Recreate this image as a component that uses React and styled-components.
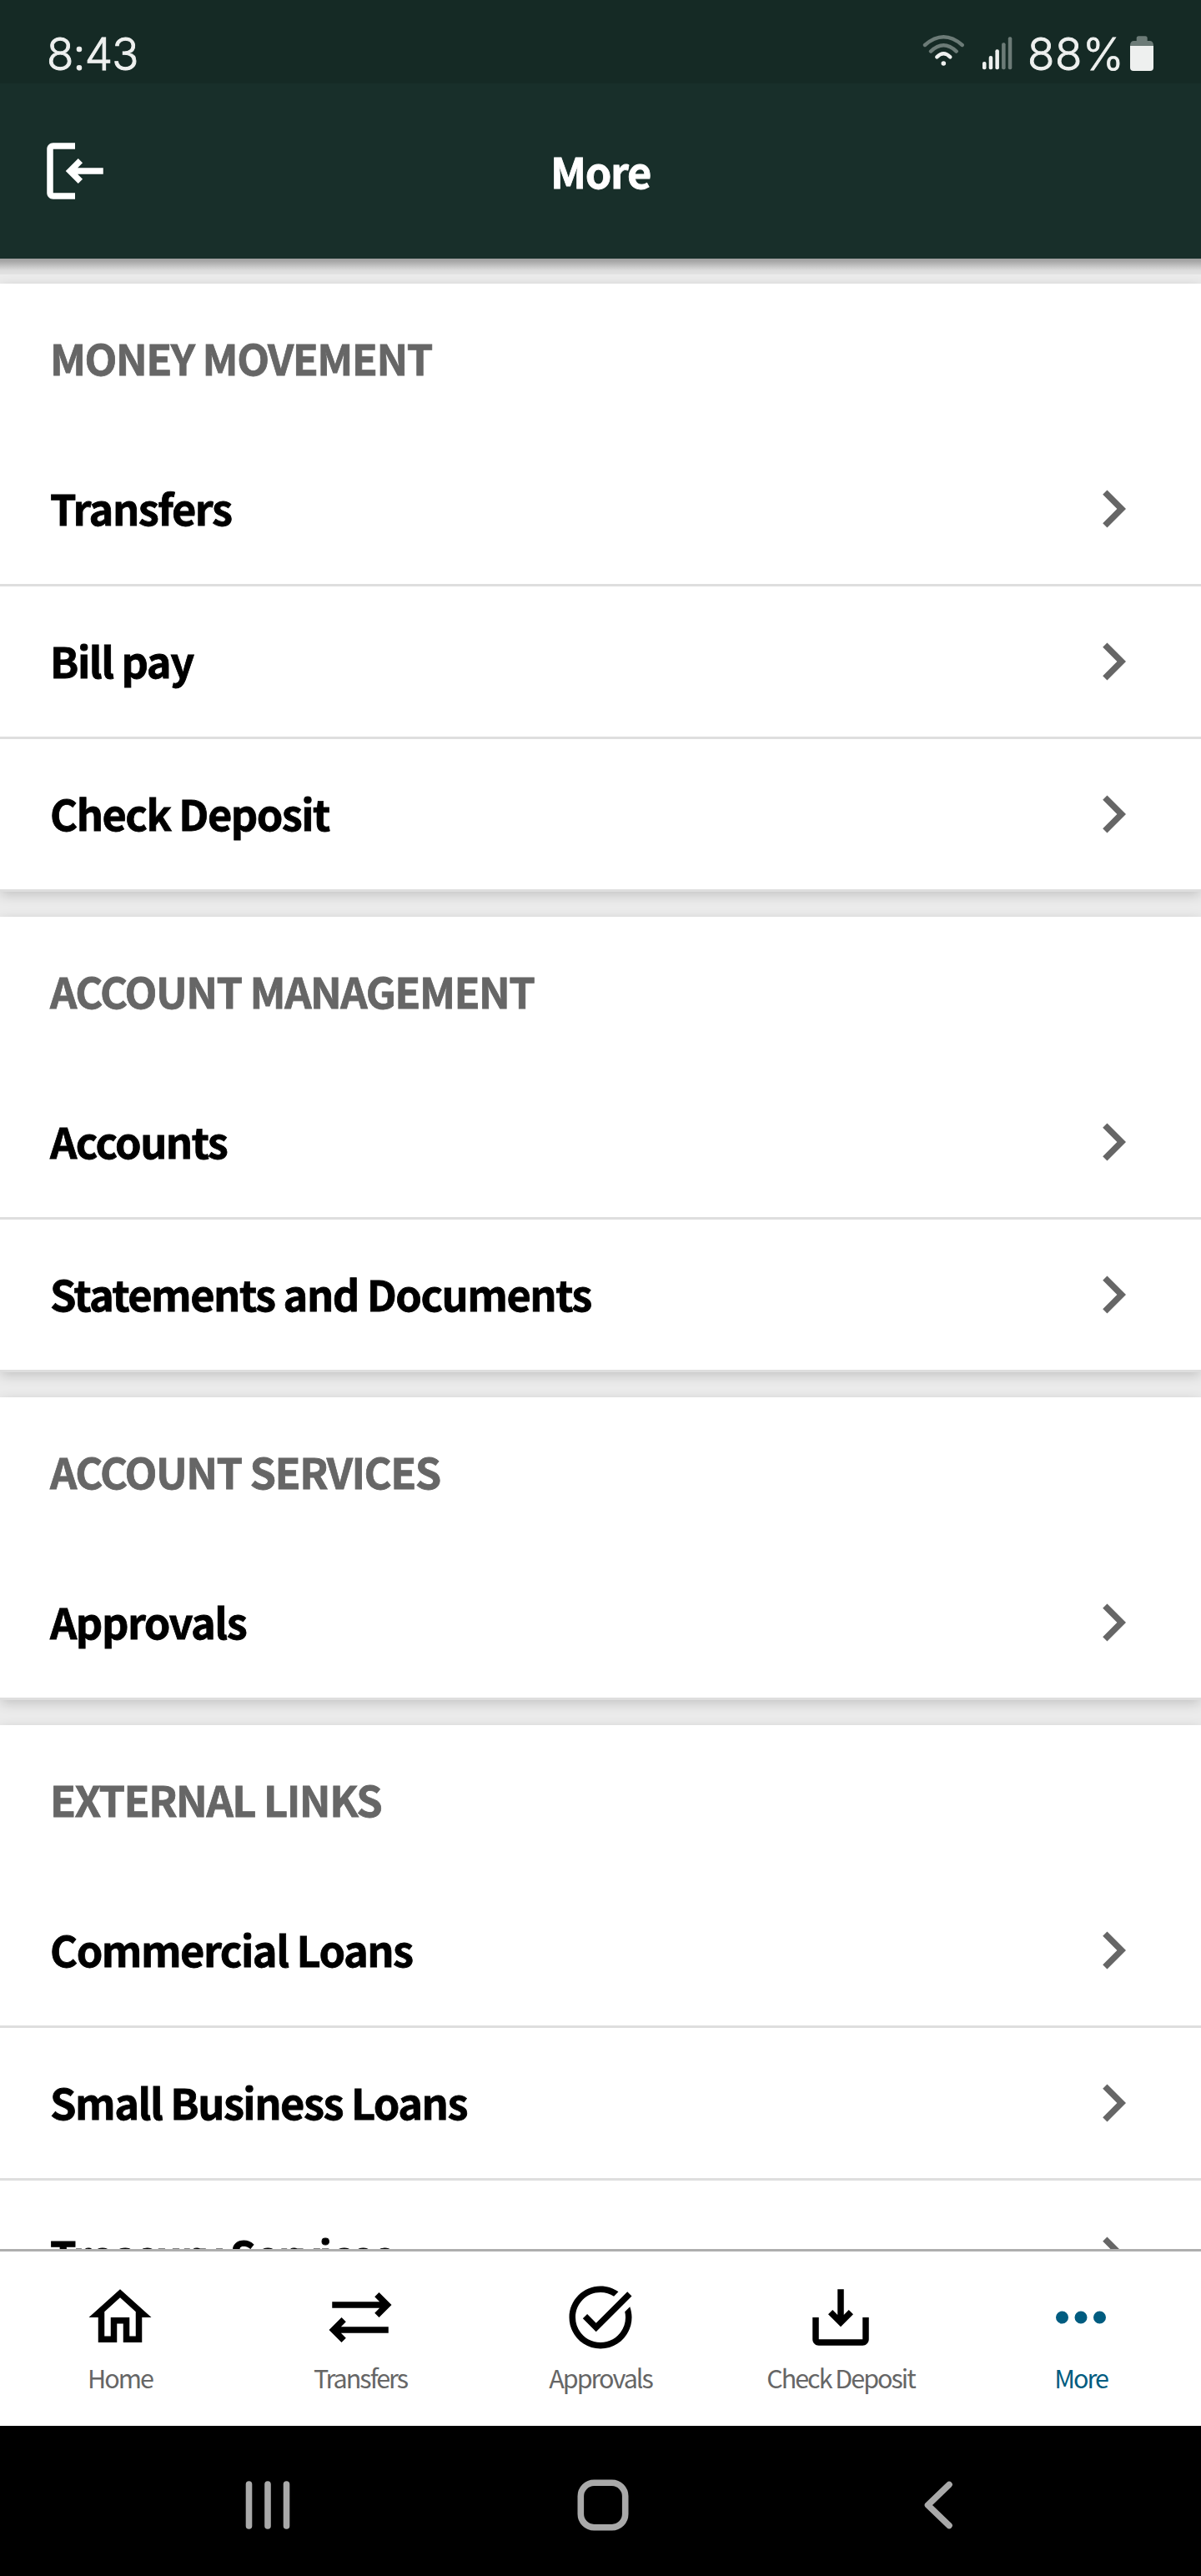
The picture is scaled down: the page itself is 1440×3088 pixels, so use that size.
import React from 'react';
import styled, { createGlobalStyle } from 'styled-components';

const GlobalStyle = createGlobalStyle`
  * {
    box-sizing: border-box;
  }
  body {
    margin: 0;
    background: #ebebeb;
    font-family: "Noto Sans CJK SC", "Noto Sans", sans-serif;
  }
`

const Screen = styled.div`
  display: flex;
  flex-direction: column;
  width: 1440px;
  height: 3088px;
  overflow: hidden;
`

const StatusBar = styled.div`
  display: flex;
  align-items: center;
  flex-shrink: 0;
  height: 100px;
  padding: 26px 56px 0;
  background: #152a25;
  color: #eef0ef;
  font-family: Inter, sans-serif;
  font-size: 53px;
  font-weight: 300;
  line-height: 60px;
  -webkit-text-stroke: 0.9px currentColor;
`

const Time = styled.span`
  flex: 1;
  padding-top: 3px;
  letter-spacing: -0.8px;
`

const StatusIcons = styled.div`
  display: flex;
  align-items: center;
  svg + svg {
    margin-left: 16px;
  }
`

const BatteryLevel = styled.span`
  width: 122px;
  margin-left: 16px;
  padding-top: 3px;
  letter-spacing: 0.6px;
`

const Header = styled.header`
  display: grid;
  grid-template-columns: 90px 1fr 90px;
  align-items: center;
  flex-shrink: 0;
  height: 210px;
  padding: 0 45px;
  background: #182f2a;
  color: #fff;
`

const IconButton = styled.button`
  display: flex;
  padding: 0;
  border: none;
  background: none;
  color: inherit;
`

const Title = styled.h1`
  margin: 0;
  padding-bottom: 3px;
  font-size: 50.5px;
  font-weight: 700;
  letter-spacing: -1.4px;
  line-height: 72px;
  text-align: center;
  -webkit-text-stroke: 0.8px currentColor;
`

const Content = styled.main`
  display: flex;
  flex-direction: column;
  flex: 1;
  gap: 30px;
  min-height: 0;
  overflow: hidden;
  padding-top: 30px;
  background: linear-gradient(#a0a0a0, #a6a6a6 3px, #c4c4c4 9px, #dcdcdc 14px, #e2e2e2 19px, transparent 19px) #ebebeb;
`

const Card = styled.section`
  flex-shrink: 0;
  background: #fff;
  box-shadow: 0 4px 14px -1px rgba(0, 0, 0, 0.19);
`

const CardTitle = styled.h2`
  display: flex;
  align-items: center;
  height: 180px;
  margin: 0;
  padding: 0 60px 4px;
  color: #666;
  font-size: 50.5px;
  font-weight: 700;
  letter-spacing: -1.5px;
  -webkit-text-stroke: 0.8px currentColor;
`

const Row = styled.div`
  display: flex;
  align-items: center;
  justify-content: space-between;
  height: 183px;
  padding: 0 60px;
  border-bottom: 3px solid #dedede;
  color: #666;
`

const RowLabel = styled.span`
  padding-bottom: 4px;
  color: #000;
  font-size: 50.5px;
  font-weight: 700;
  letter-spacing: -1.5px;
  line-height: 72px;
  -webkit-text-stroke: 0.8px currentColor;
`

const TabBar = styled.nav`
  display: grid;
  grid-template-columns: repeat(5, 1fr);
  flex-shrink: 0;
  height: 212px;
  padding-top: 34px;
  border-top: 3px solid #aeaeae;
  background: #fff;
`

const Tab = styled.div`
  display: flex;
  flex-direction: column;
  align-items: center;
  color: ${props => props.$active ? '#005c80' : '#000'};
`

const TabLabel = styled.span`
  margin-top: 5px;
  color: ${props => props.$active ? '#005c80' : '#666'};
  font-size: 30.5px;
  letter-spacing: -2px;
  line-height: 44px;
  white-space: nowrap;
`

const SystemNav = styled.div`
  display: flex;
  align-items: center;
  justify-content: center;
  flex-shrink: 0;
  gap: 312px;
  height: 180px;
  padding: 9px 0 0 5px;
  background: #000;
  color: #a9a9a9;
`

const Icon = ({ d }) => (
  <svg width="90" height="90" viewBox="0 0 24 24" fill="currentColor"><path d={d}/></svg>
)

const icons = {
  logout: 'M12 5V3H5c-1.1 0-2 .9-2 2v14c0 1.1.9 2 2 2h7v-2H5V5h7zM13 8l-4 4 4 4 1.41-1.41L12.83 13H21v-2h-8.17l1.58-1.59z',
  chevron: 'M10 6L8.59 7.41 13.17 12l-4.58 4.59L10 18l6-6z',
  home: 'M12 5.69l5 4.5V18h-2v-6H9v6H7v-7.81l5-4.5M12 3L2 12h3v8h6v-6h2v6h6v-8h3L12 3z',
  transfers: 'M18 4l-1.41 1.41L18.17 7H3v2h15.17l-1.58 1.59L18 12l4-4zM6 12l-4 4 4 4 1.41-1.41L5.83 17H21v-2H5.83l1.58-1.59z',
  approvals: 'M22 5.18L10.59 16.6l-4.24-4.24 1.41-1.41 2.83 2.83 10-10L22 5.18zM19.79 10.22c.13.57.21 1.17.21 1.78 0 4.42-3.58 8-8 8s-8-3.58-8-8 3.58-8 8-8c1.58 0 3.04.46 4.28 1.25l1.44-1.44C16.1 2.67 14.13 2 12 2 6.48 2 2 6.48 2 12s4.48 10 10 10 10-4.48 10-10c0-1.19-.22-2.33-.6-3.39l-1.61 1.61z',
  deposit: 'M13 3h-2v8.17L9.41 9.59 8 11l4 4 4-4-1.41-1.41L13 11.17zM3 12v7c0 1.1.9 2 2 2h14c1.1 0 2-.9 2-2v-7h-2v7H5v-7z',
  more: 'M6 10a2 2 0 100 4 2 2 0 000-4zM12 10a2 2 0 100 4 2 2 0 000-4zM18 10a2 2 0 100 4 2 2 0 000-4z'
}

const sections = [
  { title: 'MONEY MOVEMENT', items: ['Transfers', 'Bill pay', 'Check Deposit'] },
  { title: 'ACCOUNT MANAGEMENT', items: ['Accounts', 'Statements and Documents'] },
  { title: 'ACCOUNT SERVICES', items: ['Approvals'] },
  { title: 'EXTERNAL LINKS', items: ['Commercial Loans', 'Small Business Loans', 'Treasury Services'] }
]

const tabs = [
  { label: 'Home', icon: icons.home },
  { label: 'Transfers', icon: icons.transfers },
  { label: 'Approvals', icon: icons.approvals },
  { label: 'Check Deposit', icon: icons.deposit },
  { label: 'More', icon: icons.more }
]

const Wifi = () => (
  <svg width="56" height="46" viewBox="0 0 56 46" fill="none" strokeWidth="4.4" strokeLinecap="round">
    <path d="M5 14Q27.3 -5.4 49.7 14M12 21.6Q27.3 7 42.7 21.6" stroke="#6c7b77"/>
    <path d="M19.3 28.4Q27.3 20.4 35.3 28.4" stroke="#eef0ef"/>
    <circle cx="27.3" cy="36" r="2.8" fill="#eef0ef"/>
  </svg>
)

const Signal = () => (
  <svg width="40" height="46" viewBox="0 0 40 46">
    {[34, 27, 19.3, 11.3, 4.3].map((y, i) => (
      <rect key={y} x={2 + i * 7.7} y={y} width="4.5" height={43.3 - y} rx="2" fill={i < 3 ? '#eef0ef' : '#6c7b77'}/>
    ))}
  </svg>
)

const Battery = () => (
  <svg width="30" height="46" viewBox="0 0 30 46">
    <path d="M8.7 9V5.8Q8.7 3.3 11.2 3.3H19.2Q21.7 3.3 21.7 5.8V9H25Q29 9.5 29 15H1Q1 9.5 5 9Z" fill="#6c7b77"/>
    <path d="M1 15H29V41Q29 45 25 45H5Q1 45 1 41Z" fill="#eef0ef"/>
  </svg>
)

function App() {
  return (
    <Screen>
      <GlobalStyle/>
      <StatusBar>
        <Time>8:43</Time>
        <StatusIcons>
          <Wifi/>
          <Signal/>
          <BatteryLevel>88%</BatteryLevel>
          <Battery/>
        </StatusIcons>
      </StatusBar>
      <Header>
        <IconButton aria-label="Log out"><Icon d={icons.logout}/></IconButton>
        <Title>More</Title>
      </Header>
      <Content>
        {sections.map(section => (
          <Card key={section.title}>
            <CardTitle>{section.title}</CardTitle>
            {section.items.map(item => (
              <Row key={item}>
                <RowLabel>{item}</RowLabel>
                <Icon d={icons.chevron}/>
              </Row>
            ))}
          </Card>
        ))}
      </Content>
      <TabBar>
        {tabs.map(tab => (
          <Tab key={tab.label} $active={tab.label === 'More'}>
            <Icon d={tab.icon}/>
            <TabLabel $active={tab.label === 'More'}>{tab.label}</TabLabel>
          </Tab>
        ))}
      </TabBar>
      <SystemNav>
        <svg width="90" height="90" viewBox="0 0 90 90" stroke="currentColor" strokeWidth="7.6" strokeLinecap="round">
          <path d="M22.5 20V70M45 20V70M67.5 20V70"/>
        </svg>
        <svg width="90" height="90" viewBox="0 0 90 90" fill="none" stroke="currentColor" strokeWidth="7.6">
          <rect x="18.3" y="18.3" width="53.4" height="53.4" rx="16"/>
        </svg>
        <svg width="90" height="90" viewBox="0 0 90 90" fill="none" stroke="currentColor" strokeWidth="7.6" strokeLinecap="round" strokeLinejoin="round">
          <path d="M58 20.5L32.5 45L58 69.5"/>
        </svg>
      </SystemNav>
    </Screen>
  )
}

export default App;
